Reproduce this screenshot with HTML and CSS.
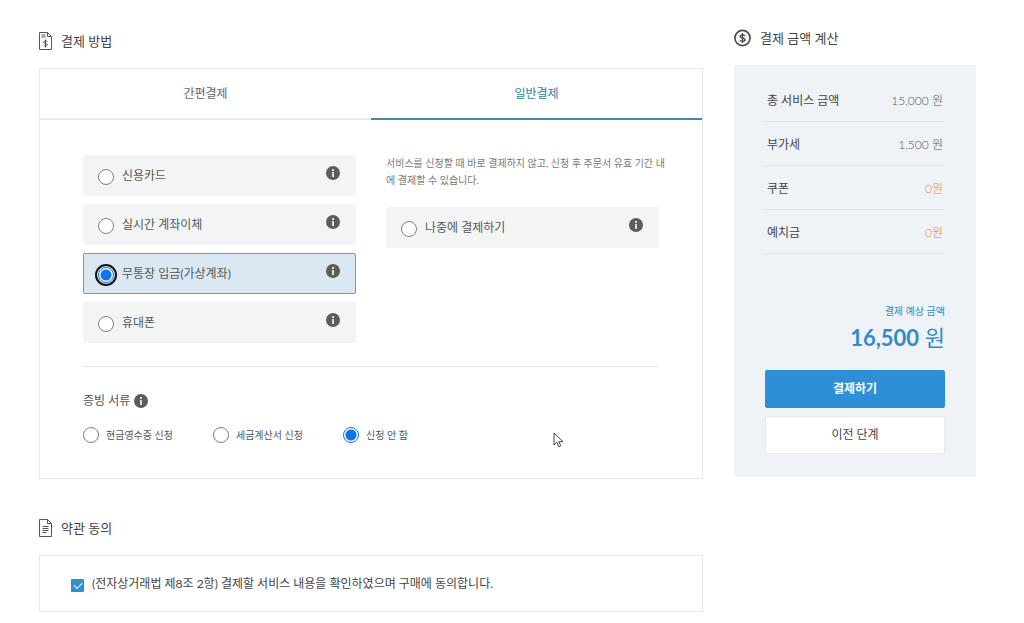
FILE: index.html
```html
<!DOCTYPE html>
<html lang="ko">

<head>
    <meta charset="utf-8">
    <meta name="viewport" content="width=device-width, initial-scale=1">
    <title>결제</title>
    <link rel="stylesheet" href="styles.css">
</head>

<body>
    <svg class="symbols" width="0" height="0" aria-hidden="true">
        <symbol id="info" viewBox="0 0 14 14">
            <circle cx="7" cy="7" r="7" fill="#5c5c5c" />
            <rect x="6" y="3" width="2" height="2" fill="#e6e0b4" />
            <rect x="6" y="6" width="2" height="5" fill="#e6e0b4" />
        </symbol>
    </svg>

    <form class="page">
        <main class="main">
            <section>
                <h2 class="title">
                    <svg width="13" height="18" viewBox="0 0 13 18" fill="none" stroke="#555" aria-hidden="true">
                        <path d="M.5 .5h8l4 4v13H.5z" />
                        <path d="M8.500 .5v4h4M2.500 3h4M2.500 5h4" />
                        <path d="M8.500 9.500C8 8.700 4.500 8.500 4.500 10.200s4 .8 4 2.500-3.500 1.600-4 .5M6.500 7.500v8" />
                    </svg>
                    결제 방법
                </h2>
                <div class="panel">
                    <div class="tabs" role="tablist">
                        <button type="button" class="tab" role="tab" aria-selected="false">간편결제</button>
                        <button type="button" class="tab active" role="tab" aria-selected="true">일반결제</button>
                    </div>
                    <div class="panelBody">
                        <div class="methods">
                            <div class="methodList">
                                <div class="option">
                                    <label><input type="radio" name="method">신용카드</label>
                                    <button type="button" class="info" aria-label="신용카드 안내"><svg><use href="#info" /></svg></button>
                                </div>
                                <div class="option">
                                    <label><input type="radio" name="method">실시간 계좌이체</label>
                                    <button type="button" class="info" aria-label="계좌이체 안내"><svg><use href="#info" /></svg></button>
                                </div>
                                <div class="option selected">
                                    <label><input type="radio" name="method" checked>무통장 입금(가상계좌)</label>
                                    <button type="button" class="info" aria-label="무통장 입금 안내"><svg><use href="#info" /></svg></button>
                                </div>
                                <div class="option">
                                    <label><input type="radio" name="method">휴대폰</label>
                                    <button type="button" class="info" aria-label="휴대폰 안내"><svg><use href="#info" /></svg></button>
                                </div>
                            </div>
                            <div class="later">
                                <p class="note">서비스를 신청할 때 바로 결제하지 않고, 신청 후 주문서 유효 기간 내<br>에 결제할 수 있습니다.</p>
                                <div class="option">
                                    <label><input type="radio" name="method">나중에 결제하기</label>
                                    <button type="button" class="info" aria-label="나중에 결제하기 안내"><svg><use href="#info" /></svg></button>
                                </div>
                            </div>
                        </div>

                        <fieldset class="receipt">
                            <legend>증빙 서류
                                <button type="button" class="info" aria-label="증빙 서류 안내"><svg><use href="#info" /></svg></button>
                            </legend>
                            <div class="receiptList">
                                <label><input type="radio" name="receipt">현금영수증 신청</label>
                                <label><input type="radio" name="receipt">세금계산서 신청</label>
                                <label><input type="radio" name="receipt" checked>신청 안 함</label>
                            </div>
                        </fieldset>
                    </div>
                </div>
            </section>

            <section class="terms">
                <h2 class="title">
                    <svg width="13" height="18" viewBox="0 0 13 18" fill="none" stroke="#555" aria-hidden="true">
                        <path d="M.5 .5h8l4 4v13H.5z" />
                        <path d="M8.500 .5v4h4M3.500 7.500h6M3.500 9.500h6M3.500 11.500h6M3.500 13.500h4" />
                    </svg>
                    약관 동의
                </h2>
                <div class="panel">
                    <label class="agree"><input type="checkbox" checked>(전자상거래법 제8조 2항) 결제할 서비스 내용을 확인하였으며 구매에 동의합니다.</label>
                </div>
            </section>
        </main>

        <aside class="side">
            <h2 class="title">
                <svg width="17" height="18" viewBox="0 0 17 18" fill="none" stroke="#484848" stroke-width="1.600" aria-hidden="true">
                    <circle cx="8.500" cy="9" r="7.600" />
                    <path d="M11 7C10.300 5.500 6.200 5.400 6.200 7.400s4.800 1.200 4.800 3.300-4.200 2-5 .3M8.500 4v10" stroke-width="1.400" />
                </svg>
                결제 금액 계산
            </h2>
            <div class="bill">
                <table>
                    <tr><th>총 서비스 금액</th><td>15,000 원</td></tr>
                    <tr><th>부가세</th><td>1,500 원</td></tr>
                    <tr><th>쿠폰</th><td class="minus">0원</td></tr>
                    <tr><th>예치금</th><td class="minus">0원</td></tr>
                </table>
                <p class="totalLabel">결제 예상 금액</p>
                <p class="total"><b>16,500</b> 원</p>
                <button type="submit" class="but pay">결제하기</button>
                <button type="button" class="but prev">이전 단계</button>
            </div>
        </aside>
    </form>

    <!-- mouse pointer -->
    <svg class="pointer" width="11" height="16" viewBox="0 0 11 16" aria-hidden="true">
        <path d="M1 1v12l2.800-2.600 2 4.400 2-1-2-4.100H10z" fill="#fff" stroke="#444" />
    </svg>
</body>

</html>
```
FILE: styles.css
```css
* {
    box-sizing: border-box;
}

body {
    margin: 0;
    background-color: #fff;
    color: #555;
    font-family: Lato, "Noto Sans CJK KR", sans-serif;
    font-size: 12px;
    line-height: 18px;
}

button, input {
    font: inherit;
    margin: 0;
}

.symbols {
    position: absolute;
}

.page {
    display: flex;
    gap: 31px;
    padding: 0 48px 11px 39px;
}

.main {
    flex: 1;
    padding-top: 32px;
}

.side {
    width: 242px;
    padding-top: 29px;
}

.title {
    display: flex;
    align-items: center;
    gap: 9px;
    margin: 0 0 18px;
    color: #444;
    font-size: 13px;
    font-weight: 400;
}

.panel {
    border: 1px solid #e6e8e9;
}

/* tabs */
.tabs {
    display: flex;
}

.tab {
    flex: 1;
    height: 51px;
    padding: 0;
    border: 0;
    border-bottom: 2px solid #e6e9ea;
    background: none;
    color: #666;
}

.tab.active {
    color: #2f7ea6;
    border-bottom-color: #45899f;
}

.panelBody {
    padding: 35px 43px 34px;
}

/* radio and check */
input[type=radio] {
    appearance: none;
    flex: none;
    width: 16px;
    height: 16px;
    border: 1px solid #808080;
    border-radius: 50%;
    background-color: #fff;
}

input[type=radio]:checked {
    border-color: #0f74e8;
    background-image: radial-gradient(circle, #0f74e8 5px, #fff 6px);
}

.info {
    display: inline-flex;
    padding: 0;
    border: 0;
    background: none;
}

.info svg {
    width: 14px;
    height: 14px;
}

/* payment methods */
.methods {
    display: grid;
    grid-template-columns: minmax(0, 1fr) minmax(0, 1fr);
    gap: 30px;
    padding-bottom: 23px;
    border-bottom: 1px solid #e6e6e6;
}

.methodList {
    display: flex;
    flex-direction: column;
    gap: 8px;
}

.option {
    display: flex;
    align-items: center;
    height: 41px;
    padding: 0 15px 0 14px;
    border: 1px solid #f3f5f5;
    border-radius: 2px;
    background-color: #f3f5f5;
}

.option label {
    display: flex;
    flex: 1;
    align-items: center;
    gap: 8px;
    padding-top: 1px;
}

.option input {
    margin-top: 2px;
}

.option .info {
    margin-bottom: 5px;
}

.option.selected {
    border-color: #5d9fc2;
    background-color: #d9e8f3;
}

.option.selected input {
    outline: 2px solid #111;
    outline-offset: 1px;
}

.note {
    margin: 0 0 18px;
    color: #777;
    font-size: 10px;
    line-height: 17px;
    white-space: nowrap;
}

.receipt {
    min-width: 0;
    margin: 25px 0 0;
    padding: 0;
    border: 0;
}

.receipt legend {
    display: flex;
    align-items: center;
    gap: 4px;
    padding: 0;
}

.receiptList {
    display: flex;
    gap: 40px;
    padding-top: 16px;
    font-size: 10px;
}

.receiptList label {
    display: flex;
    align-items: center;
    gap: 7px;
}

/* terms */
.terms {
    margin-top: 40px;
}

.agree {
    display: flex;
    align-items: center;
    gap: 8px;
    height: 55px;
    padding-left: 31px;
    color: #444;
}

.agree input {
    appearance: none;
    width: 13px;
    height: 13px;
    margin-top: 4px;
    border-radius: 1px;
    background-color: #2f8fd3;
}

.agree input::after {
    content: "";
    display: block;
    width: 7px;
    height: 4px;
    margin: 3px;
    border-left: 1px solid #fff;
    border-bottom: 1px solid #fff;
    transform: rotate(-45deg);
}

/* bill */
.bill {
    padding: 12px 31px 23px;
    border-radius: 2px;
    background-color: #eff3f8;
}

.bill table {
    width: 100%;
    border-collapse: collapse;
}

.bill th, .bill td {
    height: 44px;
    padding: 4px 2px 0;
    border-bottom: 1px solid #e1e6eb;
    font-weight: 400;
    text-align: left;
}

.bill th {
    color: #444;
}

.bill td {
    font-weight: 300;
    text-align: right;
}

.bill td.minus {
    color: #e5812f;
}

.totalLabel {
    margin: 48px 0 0;
    color: #2f8bc9;
    font-size: 10px;
    text-align: right;
}

.total {
    margin: 2px 0 16px;
    color: #2f8bc9;
    font-size: 22px;
    line-height: 32px;
    text-align: right;
}

.but {
    display: block;
    width: 100%;
    height: 38px;
    border: 1px solid #e6e9ee;
    border-radius: 2px;
    background-color: #fff;
    color: #444;
}

.pay {
    margin-bottom: 8px;
    border-color: #2f8fd6;
    background-color: #2f8fd6;
    color: #fff;
    font-weight: 700;
}

.pointer {
    position: absolute;
    left: 553px;
    top: 432px;
}
```
